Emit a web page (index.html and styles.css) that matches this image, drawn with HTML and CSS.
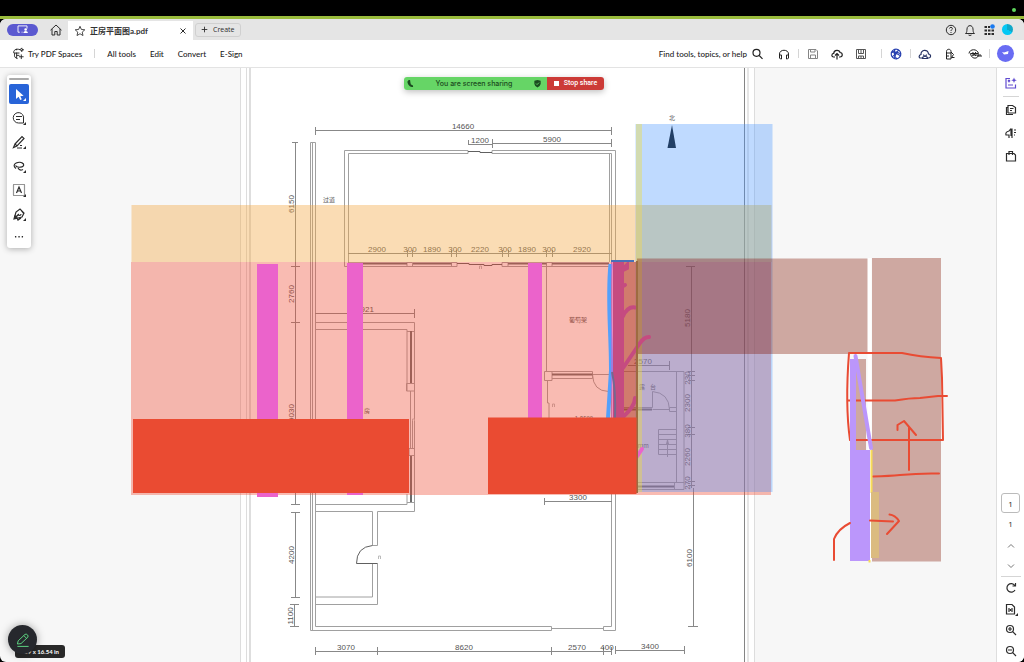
FILE: index.html
```html
<!DOCTYPE html>
<html lang="en">
<head>
<meta charset="utf-8">
<title>正房平面图a.pdf</title>
<link rel="stylesheet" href="styles.css">
</head>
<body>
<div class="menubar"><span class="camera-dot"></span></div>
<div class="window">
  <header class="tabbar">
    <button class="share-pill" aria-label="Shared workspace"><svg class="pill-icon" viewBox="0 0 14 10"><path d="M4 8H2V1h10v3M6 8h1"/><path class="solid" d="M8 9c0-3 5-3 5 0zM9 5a1.5 1.5 0 1 0 3 0a1.5 1.5 0 1 0-3 0"/></svg></button>
    <button class="icon home" aria-label="Home"><svg viewBox="0 0 14 14"><path d="M1.5 7.2 7 2l5.500 5.200M3 6v6h2.800V8.500h2.400V12H11V6"/></svg></button>
    <div class="tab">
      <svg class="star" viewBox="0 0 14 14"><path d="m7 1.500 1.600 3.700 4 .4-3 2.700.9 4L7 10.200l-3.500 2.100.9-4-3-2.700 4-.4z"/></svg>
      <span class="tab-title">正房平面图a.pdf</span>
      <button class="close" aria-label="Close tab"><svg viewBox="0 0 8 8"><path d="m1.500 1.500 5 5m0-5-5 5"/></svg></button>
    </div>
    <button class="create"><svg viewBox="0 0 8 8"><path d="M4 .8v6.400M.8 4h6.400"/></svg>Create</button>
    <div class="tab-actions">
      <button class="icon" aria-label="Help"><svg viewBox="0 0 14 14"><circle cx="7" cy="7" r="4.700"/><path d="M5.500 5.500c.2-1.700 3-1.500 2.900.2C8.300 6.800 7 6.700 7 8m0 1v1"/></svg></button>
      <button class="icon" aria-label="Notifications"><svg viewBox="0 0 14 14"><path d="M2.500 10.500C4 9.500 3.800 8 4 6c.2-4.500 5.800-4.500 6 0 .2 2 0 3.500 1.500 4.500zM5.500 12q1.500 1 3 0"/></svg></button>
      <button class="icon" aria-label="Apps"><svg viewBox="0 0 14 14"><path class="dots" d="M2.500 4H5m1 0h2M2.500 7.500H5m1 0h2.500m1 0H12M2.500 11H5m1 0h2.500m1 0H12"/><circle class="badge" cx="10.500" cy="3.500" r="2.300"/></svg></button>
      <button class="profile" aria-label="Profile"></button>
    </div>
  </header>

  <nav class="toolbar">
    <button class="spaces"><svg viewBox="0 0 14 14"><path d="M9 3C4 1 1 4 2 6.500h6M3 6.500C2 10 3 12 6 12.500M5 9h3M5 3.500V2M10.500 1l.4 1.600L12.500 3l-1.600.4-.4 1.600-.4-1.600L8.500 3zM10 8v5M7.500 10.500h5M5 6v6"/></svg>Try PDF Spaces</button>
    <span class="sep wide"></span>
    <div class="menus"><button>All tools</button><button>Edit</button><button>Convert</button><button>E-Sign</button></div>
    <div class="actions">
      <button class="find">Find tools, topics, or help</button>
      <div class="group">
        <button class="icon" aria-label="Search"><svg viewBox="0 0 14 14"><circle class="bold" cx="5.500" cy="5.800" r="3.500"/><path class="bold" d="m8.200 8.500 3.300 3.300"/></svg></button>
        <button class="icon" aria-label="Read aloud"><svg viewBox="0 0 14 14"><path d="M2.500 9V7c0-5 9-5 9 0v2M2.500 8h2v4H3.500l-1-1zm9 0h-2v4h1l1-1z"/></svg></button>
      </div>
      <span class="sep"></span>
      <div class="group files">
        <button class="icon muted" aria-label="Save"><svg viewBox="0 0 14 14"><path d="M2.500 2.500h7.500L11.500 4v7.500h-9zM4.500 2.500v2.500H9V2.500M4.500 11.500V8h5v3.500"/></svg></button>
        <button class="icon" aria-label="Upload"><svg viewBox="0 0 14 14"><path class="bold" d="M5 10H3.500C1.300 10 1.300 6.600 3.700 6.400 4 2.500 9.500 2.500 10 5.500c3 .2 3 4.500 0 4.500H9M7 12.500V6.500M5 8.500l2-2 2 2"/></svg></button>
        <button class="icon print" aria-label="Print"><svg viewBox="0 0 14 14"><path d="M2.500 2.500h9v9h-9zM4.500 2.500v4h5v-4M7 3v3M4.500 11.500V9h5v2.500M7 9v2.500"/></svg></button>
      </div>
      <span class="sep"></span>
      <div class="group"><button class="icon globe" aria-label="Link"><svg viewBox="0 0 14 14"><circle class="bold" cx="7" cy="7" r="4.800"/><path class="bold" d="M2 6c4-3 7 0 10 1M6 2c-2 5 0 8 2 10M10 3c-4 3-4 5-7 7M3 4l9 5M7 7l-2 4"/></svg></button></div>
      <span class="sep"></span>
      <div class="group last">
        <button class="icon navy" aria-label="Share"><svg viewBox="0 0 14 14"><path class="bold" d="M4.500 11H2.500C.5 11 .8 8 3 7.500 2.500 2.500 10 1.500 10.500 7c3 .5 2.500 4 0 4H9.500M4.500 11.500c0-3 5-3 5 0zM5.500 7.500a1.500 1.500 0 1 0 3 0"/></svg></button>
        <button class="icon" aria-label="Comment"><svg viewBox="0 0 14 14"><path d="M3.500 12V4.500c0-3 4.500-3 4.500 0V12zM3.500 6H8M3.500 9H6M8 5l2.500 2.500L8.500 10.500h3"/></svg></button>
        <button class="icon" aria-label="Request"><svg viewBox="0 0 14 14"><path d="M1 6.500C1.500 1.500 9.500 1.500 10.500 6.500H2.500c1 6.500 8 5.500 8 1M4 8h9M4.500 5l3.500 4m0-4L4.500 9M9 9h5"/></svg></button>
      </div>
      <span class="sep"></span>
      <button class="assistant" aria-label="Assistant"><svg viewBox="0 0 16 16"><path d="m5 6 2 .5L11.500 5 11 8l-4 .5z"/></svg></button>
    </div>
  </nav>

  <main class="workspace">
    <section class="canvas">
      <svg class="plan" viewBox="0 68 996 594" preserveAspectRatio="xMinYMin meet" role="img" aria-label="Floor plan">
        <rect class="paper" x="241" y="68" width="514" height="594"/>
        <path class="edge" d="M240.500 68v594M246.500 68v594M754.500 68v594"/>
        <path class="edge strong" d="M250 68v594"/>
        <path class="edge wide" d="M748 68v594"/>
        <path class="frame" d="M744.500 68v594"/>

        <g class="walls">
          <path d="M310.500 630.500V142.500H315.500V626.500H551.500V630.500H310.500M312.500 143v487"/>
          <path d="M344.500 266.500V150.500H468V153.500H348.500V263M492 150.500H615.500V630.500H603.500V626.500H611.500V153.500H492zM609.500 153.500V262M551.500 628.500h52"/>
          <path d="M344.500 266.500H457M508 266.500H609M407 262.500h5.500v4H407zM451.500 262.500h5.500v4h-5.500zM502 262.500h6v4h-6zM546.500 262.500h5.500v4h-5.500z"/>
          <path class="heavy" d="M349 263.500h58M413 263.500h38.500M508 263.500h38.500M552 263.500h57"/>
          <path class="thin-heavy" d="M468 151.500h12v1h12M457 263.500h12v1h15v1h8v-1h10"/>
          <path d="M315.500 322.500H414.500V511.500H377.500V545.500H372.500V511.500H315.500M315.500 329.500H407V391M407 331.500h7.500M406.500 383.500h8v7.500h-8zM410.500 391v57M412.500 419v29M409 448.500h5.500v7H409zM407 494v10.500H315.500M407 502.500h7.500"/>
          <path class="heavy" d="M411 331v52M411 456v46"/>
          <path d="M377.500 563.500V604.500H315.500M372.500 563.500V597H315.500"/>
          <path class="thin-heavy" d="M372.500 545.500Q356.500 547 356.500 563.500H377.500"/>
          <path d="M546.500 267v104M544.500 371.500h7.500v9h-7.500zM552 371.500h40.500v7H552M592.500 374.500H609M592.500 374.500Q593 391 608.500 391.500M547.500 380v23h1.500v15"/>
          <path class="heavy" d="M552 374.500h40.500M624 409.500h28M632 486.500h42.500"/>
          <path d="M624 371.500H684V489.500H632M676.500 371.500V482.500M632 482.500h52M674.500 482.500v7M624 407.500h28.500V391.500Q669 393 669.500 409.500H652.500M669.500 407.500h7v4h-7zM658.500 429.500H676.500M658.500 429.500v25h18M658.500 434.500h18M658.500 439.500h18M658.500 444.500h18M658.500 449.500h18M667.500 457V440l-1 4h2l-1-4"/>
        </g>

        <path class="dims" d="M315 130.500H612M315.500 127v8M611.500 127v8M468 144.500h24M468.500 140v5M492.500 139v9M492 143.500H612M611.500 139v8M348 253.500H612M407.500 250v7M412.500 250v7M451.500 250v7M456.500 250v7M502.500 250v7M508.500 250v7M546.500 250v7M552.500 250v7M295.500 142V504.500M292 142.500h6M291 266.500h9M291 322.500h9M291 504.500h9M295.500 512V597.500M291 512.500h9M291 597.500h9M294.500 604V627M290 604.500h9M290 626.500h9M315 313.500H415M414.500 309v9M544 501.500h68M544.500 498v7M628 365.500h42M669.500 361v9M691.500 266v222M686 266.500h9M688 371.500h7M688 375.500h7M688 380.500h7M688 427.500h7M688 434.500h7M688 481.500h7M688 485.500h7M693.500 488V627M688 626.500h10M315 651.500H612M315.500 647v8M377.500 647v8M551.500 647v8M603.500 647v8M611.500 647v8M615 650.500h70M615.500 646v8M684.500 646v8"/>
        <g class="numbers">
          <text x="463" y="129">14660</text><text x="480" y="143">1200</text><text x="552" y="142">5900</text>
          <text x="377" y="252">2900</text><text x="410" y="252">300</text><text x="432" y="252">1890</text><text x="455" y="252">300</text><text x="480" y="252">2220</text><text x="505" y="252">300</text><text x="527" y="252">1890</text><text x="549" y="252">300</text><text x="582" y="252">2920</text>
          <text x="365" y="312">4921</text><text x="578" y="500">3300</text><text x="643" y="364">2570</text>
          <text x="346" y="650">3070</text><text x="464" y="650">8620</text><text x="577" y="650">2570</text><text x="607" y="650">400</text><text x="650" y="649">3400</text>
          <text transform="translate(294 204) rotate(-90)">6150</text><text transform="translate(294 294) rotate(-90)">2760</text><text transform="translate(294 413) rotate(-90)">9030</text><text transform="translate(294 555) rotate(-90)">4200</text><text transform="translate(293 616) rotate(-90)">1100</text>
          <text transform="translate(690 318) rotate(-90)">5180</text><text transform="translate(690 378) rotate(-90)">230</text><text transform="translate(690 403) rotate(-90)">2300</text><text transform="translate(690 431) rotate(-90)">380</text><text transform="translate(690 457) rotate(-90)">2260</text><text transform="translate(690 483) rotate(-90)">270</text><text transform="translate(692 558) rotate(-90)">6100</text>
        </g>
        <g class="rooms"><text x="672" y="120">北</text><text x="329" y="202">过道</text><text x="578" y="322">葡萄架</text><text x="367" y="413">房</text><text x="642" y="389">露</text><text x="653" y="389">台</text><text x="640" y="448">20mm</text><text x="584" y="421">1.8500</text></g>
        <path class="marks" d="M378.500 559v-3h2v3M479.500 269v-3h2v3M552.500 407v-3h2v3M412.500 421v-2h2v2"/>
        <path class="north" d="M672 125 667.500 148H676z"/>

        <rect class="orange" x="131.500" y="205" width="640" height="57"/>
        <rect class="pink" x="131" y="262" width="640" height="233"/>
        <rect class="magenta" x="257" y="264" width="21" height="233"/>
        <rect class="magenta" x="347" y="263" width="16" height="232"/>
        <rect class="magenta" x="528" y="263" width="14" height="155"/>
        <rect class="red" x="133" y="419" width="276" height="74"/>
        <rect class="blue" x="635.500" y="124" width="137" height="368"/>
        <rect class="sage" x="642" y="205" width="129" height="54"/>
        <rect class="lime" x="636" y="124" width="6" height="368"/>
        <rect class="brown" x="637" y="258.500" width="231" height="95.500"/>
        <rect class="brown" x="872" y="258" width="69" height="303.500"/>
        <rect class="terra" x="624" y="262" width="13" height="156"/>
        <path class="sky-stroke" d="M610.500 264C607 300 611 330 611 370L608 418"/>
        <path class="violet-stroke" d="M612 262V418"/>
        <rect class="rose" x="613" y="262" width="11" height="156"/>
        <path class="teal-stroke" d="M612 372Q616 390 615 418"/>
        <path class="rose-stroke" d="M623 269l4-4v3l-4 2M623 286l2-1M623 316Q628 306 635 307.500M623 368 640 343Q644 337 649 337M623 417Q635 406 635 398"/>
        <path class="pink-stroke" d="M634 461 642 449"/>
        <path class="top-stroke" d="M611 261h23"/>
        <rect class="olive" x="636" y="261" width="2" height="232"/>
        <rect class="red" x="488" y="417.500" width="148.500" height="76.500"/>

        <path class="gap" d="M869.500 258V561"/>
        <rect class="brown" x="856" y="359" width="10" height="91"/>
        <path class="pen" d="M849 353H902Q920 357 941 358L942 378 943 440H850Q845 405 849 353M848 400.500H895Q910 398 920 398L938 396H947M873 476.500Q890 476 900 475 920 473 939 473.500M909 470V428M897.500 430V425L904 421 916 435"/>
        <path class="purple" d="M850 359h6v91H870v111h-20z"/>
        <path class="purple-stroke" d="M855.500 356 871 448"/>
        <path class="yellow-stroke" d="M871.500 450v43M869.500 560v2.500"/>
        <rect class="mustard" x="871" y="492" width="8" height="66"/>
        <path class="pen" d="M834 560V539Q838 529 850 523M870 520.500 893 521.500M889.500 514.500Q895 515 899 521L887 534"/>
      </svg>

      <aside class="tools">
        <span class="grip"></span>
        <button class="tool active" aria-label="Select"><svg viewBox="0 0 20 20"><path class="solid" d="M7 5v10l2.600-2.200 1.600 3.200 1.600-.8-1.500-3 3.300-.4z"/><path class="corner" d="M17 14v3h-3z"/></svg></button>
        <button class="tool" aria-label="Comment"><svg viewBox="0 0 20 20"><path d="M14.500 15H9.500A5.200 5.200 0 1 1 14.500 11zM7 8.500h6M7 11.500h4"/><path class="corner" d="M17 14v3h-3z"/></svg></button>
        <button class="tool" aria-label="Highlight"><svg viewBox="0 0 20 20"><path class="bold" d="M6 12 13 4.500 15 6.500 8 14zM6 12l-1.500 3.500L8 14"/><path d="M8 16h5M11 13.500h2"/><path class="corner" d="M17 14v3h-3z"/></svg></button>
        <button class="tool" aria-label="Draw"><svg viewBox="0 0 20 20"><path class="bold" d="M7 12.500C1 8 11 4 14.500 8c1.500 4-7 4-8 1.500M9 12c1 2 3 2.500 5 1.500"/><path class="corner" d="M17 14v3h-3z"/></svg></button>
        <button class="tool" aria-label="Text"><svg viewBox="0 0 20 20"><path class="dash" d="M4.500 4.500h11v11h-11z"/><path class="bold" d="M7.500 13 10 7l2.500 6M8.500 11h3"/><path class="corner" d="M17 14v3h-3z"/></svg></button>
        <button class="tool" aria-label="Sign"><svg viewBox="0 0 20 20"><path class="bold" d="M5 15 7 8l4-3 4 4-2 4zM5 15l5-5M11 5l4 5M9 10a1.500 1.500 0 1 0 3 0M5 12h2l2 4 3-2"/><path class="corner" d="M17 14v3h-3z"/></svg></button>
        <button class="tool more" aria-label="More"><svg viewBox="0 0 20 20"><path class="solid" d="M5.500 9h1.500v1.500H5.500zM9.300 9h1.500v1.500H9.300zM13 9h1.500v1.500H13z"/></svg></button>
      </aside>

      <div class="sharebar"><div class="sharing"><svg viewBox="0 0 10 10"><path class="solid" d="M3 1 1.500 3C2 6 4 9 8 9l-.5-2-2-1L5 4.500 4.500 1z"/></svg><span>You are screen sharing</span><svg viewBox="0 0 10 10"><path class="solid" d="m5 1 3.500 1v3.500Q8 8 5 9.500 2 8 1.500 5.500V2z"/><path class="check" d="m3.300 5 1.200 1.200L6.700 4"/></svg></div><button><span class="stop"></span>Stop share</button></div>

      <div class="corner-tools"><span class="size">39 x 16.54 in</span><button class="annotate" aria-label="Annotate"><svg viewBox="0 0 20 20"><path class="bold" d="M3 15l1-4L12.500 3Q14 2 15.500 3.500T16 6.500L7.500 14.500zM11 4.500l3.500 3.500M3 18h14"/></svg></button></div>
    </section>

    <aside class="rail">
      <div class="rail-group">
        <button class="icon violet" aria-label="AI assistant"><svg viewBox="0 0 14 14"><path class="bold" d="M6 2.500H2V12h9.500V8.500M4 9h5M4 6l2-2m-2 0 2 2"/><path class="solid" d="m10 1.500.8 2 2 .8-2 .8-.8 2-.8-2-2-.8 2-.8z"/></svg></button>
        <span class="rule"></span>
        <button class="icon" aria-label="Comments"><svg viewBox="0 0 14 14"><path class="bold" d="M4 10V2.500h4.500l3 2V10H4M4 4.500H2.500v7H9M6 5.500h3.500M6 7.500h2"/></svg></button>
        <button class="icon" aria-label="Bookmarks"><svg viewBox="0 0 14 14"><path class="bold" d="M7 2.500 5 5Q1 6 2 9h3v3M8 2.500V12M10 4h2m-2 2.500h2m-2 2.500h1M7 3v7"/></svg></button>
        <button class="icon" aria-label="Pages"><svg viewBox="0 0 14 14"><path class="bold" d="M2.500 4.500h7.500L11.500 6v6h-9zM5 6V2.500h3.500V6"/></svg></button>
      </div>
      <div class="pager">
        <input class="page" aria-label="Page number" value="1"><span class="count">1</span>
        <button class="icon step" aria-label="Previous page"><svg viewBox="0 0 14 14"><path d="m4 8.500 3-3 3 3"/></svg></button>
        <button class="icon step" aria-label="Next page"><svg viewBox="0 0 14 14"><path d="m4 5.500 3 3 3-3"/></svg></button>
        <span class="rule"></span>
        <button class="icon zoom" aria-label="Rotate"><svg viewBox="0 0 14 14"><path class="bold" d="M10.800 4.500A4.300 4.300 0 1 0 11 9M11.500 2v3H8.500"/></svg></button>
        <button class="icon zoom" aria-label="Page display"><svg viewBox="0 0 14 14"><path class="bold" d="M2.500 2.500h5.500l2.500 2.500v7h-8zM5 6v4m3-4v4M6.500 7v2"/><path class="corner" d="M14 11v3h-3z"/></svg></button>
        <button class="icon zoom" aria-label="Zoom in"><svg viewBox="0 0 14 14"><circle class="bold" cx="6" cy="6" r="3.500"/><path class="bold" d="m8.700 8.700 3.300 3.300M4 6h4M6 4v4"/></svg></button>
        <button class="icon zoom" aria-label="Zoom out"><svg viewBox="0 0 14 14"><circle class="bold" cx="6" cy="6" r="3.500"/><path class="bold" d="m8.700 8.700 3.300 3.300M4 6h4"/></svg></button>
      </div>
    </aside>
  </main>
</div>
</body>
</html>
```
FILE: styles.css
```css
* { box-sizing: border-box; }
body { margin: 0; height: 100vh; overflow: hidden; display: flex; flex-direction: column; background: #000; color: #2c2c2c; font: 8px/12px "Noto Sans", "Noto Sans CJK SC", sans-serif; }
button { margin: 0; padding: 0; border: 0; background: none; color: inherit; font: inherit; white-space: nowrap; }
svg { display: block; fill: none; stroke: currentColor; stroke-width: 1; }
.bold { stroke-width: 1.2; }
.solid, .corner { fill: currentColor; stroke: none; }
.menubar { height: 19px; flex: none; display: flex; justify-content: flex-end; padding: 8px 8px 0; border-bottom: 3px solid #9abc3c; }
.camera-dot { width: 4px; height: 4px; border-radius: 50%; background: #5ed65c; }
.window { flex: 1; min-height: 0; display: flex; flex-direction: column; background: #f7f7f7; border-radius: 6px; overflow: hidden; }
.icon { width: 14px; height: 14px; flex: none; }
.icon svg { width: 14px; height: 14px; }

.tabbar { height: 21px; flex: none; display: flex; align-items: center; padding: 0 11px 0 7px; background: #e5e5e5; }
.share-pill { width: 31px; height: 12px; border-radius: 6px; background: #5b59d0; color: #fff; display: flex; justify-content: center; align-items: center; }
.pill-icon { width: 13px; height: 9px; }
.home { margin: 0 5px 0 11px; }
.tab { width: 125px; align-self: stretch; margin-top: 2px; padding: 0 6px; display: flex; align-items: center; gap: 4px; background: #fff; }
.star { width: 12px; height: 12px; }
.tab-title { flex: 1; font: 700 8px/12px Lato, "Noto Sans CJK SC", sans-serif; color: #333; }
.close, .close svg { width: 8px; height: 8px; }
.create { height: 14px; margin-left: 2px; padding: 0 5px; border: 1px solid #d0d0d0; border-radius: 3px; display: flex; align-items: center; gap: 5px; font: 7px/12px "Open Sans", sans-serif; }
.create svg { width: 7px; height: 7px; }
.tab-actions { margin-left: auto; display: flex; align-items: center; gap: 5px; }
.dots { stroke-width: 2; }
.badge { fill: #1879f0; stroke: none; }
.profile { width: 11px; height: 11px; margin-left: 1px; border-radius: 50%; background: conic-gradient(#10a8c8 0 33%, #04c8f5 33%); }

.toolbar { height: 28px; flex: none; display: flex; align-items: center; padding: 0 10px 0 12px; background: #fff; border-bottom: 1px solid #e3e3e3; font: 500 8px/12px Lato, sans-serif; color: #222; }
.spaces { display: flex; align-items: center; gap: 3px; }
.spaces svg { width: 13px; height: 13px; }
.sep { width: 1px; height: 9px; margin: 0 7px; background: #d5d5d5; }
.sep.wide { margin: 0 12px; }
.menus { display: flex; gap: 14px; }
.actions { margin-left: auto; display: flex; align-items: center; }
.group { display: flex; gap: 12px; }
.group.files { gap: 10px; padding-right: 6px; }
.group.last { gap: 11px; }
.find { margin-right: 4px; }
.muted { color: #858585; }
.print { color: #555; }
.globe { color: #2840b0; }
.navy { color: #263263; }
.assistant { width: 17px; height: 17px; border-radius: 50%; background: #696cf3; color: #fff; }
.assistant svg { width: 16px; height: 16px; fill: currentColor; stroke: none; }

.workspace { flex: 1; min-height: 0; display: flex; }
.canvas { position: relative; flex: 1; min-width: 0; overflow: hidden; }
.plan { width: 100%; height: 100%; stroke: none; }
.paper { fill: #fff; }
.edge { stroke: #ddd; }
.edge.strong { stroke: #bdbdbd; stroke-width: 1; }
.edge.wide { stroke: #e6e6e6; stroke-width: 2; }
.frame { stroke: #858585; }
.walls { stroke: #a0a0a0; stroke-width: 1; }
.heavy { stroke: #6c6c6c; stroke-width: 2; }
.thin-heavy { stroke: #606060; }
.dims { stroke: #888; stroke-width: 1; }
.numbers { font: 8px "Liberation Sans", sans-serif; fill: #555; text-anchor: middle; }
.rooms { font: 6px "Noto Sans CJK SC", sans-serif; fill: #555; text-anchor: middle; }
.marks { stroke: #bbb; }
.north { fill: #0e1114; }
.orange { fill: rgba(242, 168, 68, .4); }
.pink { fill: rgba(238, 76, 52, .38); }
.magenta { fill: #eb63cb; }
.red { fill: #ea4b32; }
.blue { fill: rgba(72, 149, 255, .35); }
.sage { fill: rgba(170, 215, 140, .15); }
.lime { fill: rgba(240, 219, 60, .4); }
.brown { fill: rgba(130, 20, 1, .35); }
.terra { fill: rgba(170, 60, 40, .5); }
.rose { fill: #c54b80; }
.olive { fill: #9d6b40; }
.gap { stroke: #fff; stroke-width: 4; }
.purple { fill: #bb96fb; }
.purple-stroke { stroke: #bb96fb; stroke-width: 4; stroke-linecap: round; }
.mustard { fill: #dbbb80; }
.yellow-stroke { stroke: #f8dc57; stroke-width: 2; }
.pen { stroke: #e94b33; stroke-width: 2; stroke-linecap: round; stroke-linejoin: round; }
.sky-stroke { stroke: #53a0fb; stroke-width: 4; }
.violet-stroke { stroke: #e05cc6; stroke-width: 1; }
.teal-stroke { stroke: #756990; stroke-width: 2; }
.rose-stroke { stroke: #c54b80; stroke-width: 4; stroke-linecap: round; }
.pink-stroke { stroke: #eb63cb; stroke-width: 4; stroke-linecap: round; }
.top-stroke { stroke: #4870b8; stroke-width: 2; }

.tools { position: absolute; left: 7px; top: 7px; width: 24px; padding: 3px 2px 2px; display: flex; flex-direction: column; gap: 4px; background: #fff; border-radius: 3px; box-shadow: 0 1px 6px rgba(0, 0, 0, .3); }
.grip { height: 2px; border-radius: 1px; background: #aaa; }
.tool { width: 20px; height: 20px; border-radius: 2px; }
.tool svg { width: 20px; height: 20px; }
.tool.active { background: #2864d8; color: #fff; }
.tool.more { height: 18px; }
.tool.more svg { height: 18px; }
.dash { stroke-dasharray: 1 1; stroke-width: 1.2; }
.sharebar { position: absolute; left: 404px; top: 9px; width: 200px; height: 13px; display: flex; border-radius: 3px; overflow: hidden; box-shadow: 0 2px 6px rgba(0, 0, 0, .25); }
.sharing { flex: 1; display: flex; align-items: center; justify-content: space-between; padding: 0 5px 0 2px; background: #66d566; color: #1b4a20; font: 500 7px/13px Inter, sans-serif; }
.sharing svg { width: 9px; height: 9px; }
.check { stroke: #66d566; }
.sharebar button { width: 57px; display: flex; align-items: center; justify-content: center; gap: 5px; background: #cc3b37; color: #fff; font: 500 7px/13px Roboto, sans-serif; }
.stop { width: 5px; height: 5px; background: #fff; }
.corner-tools { position: absolute; left: 8px; bottom: 4px; width: 57px; height: 33px; }
.size { position: absolute; right: 0; bottom: 0; width: 50px; padding-right: 6px; border-radius: 3px; background: #292929; color: #fff; font: 700 6px/13px Lato, sans-serif; text-align: right; white-space: nowrap; }
.annotate { position: absolute; left: 0; top: 0; width: 29px; height: 29px; border-radius: 50%; display: grid; place-items: center; background: #26282d; color: #5fd884; box-shadow: 0 0 8px rgba(0, 0, 0, .35); }
.annotate svg { width: 16px; height: 16px; }

.rail { width: 28px; flex: none; display: flex; flex-direction: column; justify-content: space-between; background: #fff; border-left: 1px solid #dedede; }
.rail-group, .pager { display: flex; flex-direction: column; align-items: center; }
.rail-group { padding-top: 8px; gap: 9px; }
.rail-group .rule { margin: -3px 0 -3px; }
.rule { width: 16px; height: 1px; background: #d5d5d5; }
.violet { color: #614bd0; }
.pager { padding-bottom: 1px; }
.page { width: 19px; height: 20px; padding: 0; border: 1px solid #bbb; border-radius: 3px; background: #fff; color: #222; font: 8px/12px "Open Sans", sans-serif; text-align: center; }
.count { margin: 5px 0 6px; font-family: "Open Sans", sans-serif; }
.step { height: 20px; display: grid; place-items: center; color: #777; }
.pager .rule { width: 20px; }
.zoom { height: 21px; display: grid; place-items: center; }
```
